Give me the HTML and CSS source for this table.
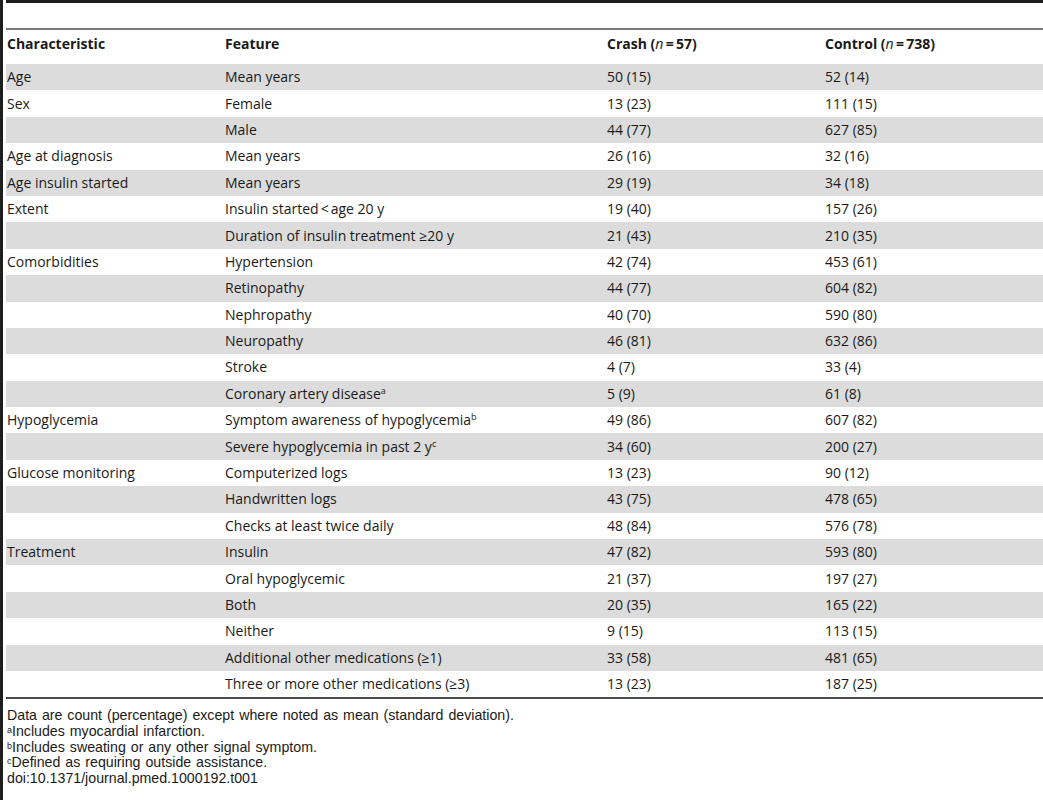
FILE: index.html
```html
<!DOCTYPE html>
<html lang="en">
<head>
    <meta charset="UTF-8">
    <meta name="viewport" content="width=device-width, initial-scale=1.0">
    <title>Table 1. Characteristics of drivers</title>
    <link rel="stylesheet" href="styles.css">
</head>
<body>
    <div class="frame">
        <div class="figure">
            <table class="data-table">
                <thead>
                    <tr>
                        <th class="col-char">Characteristic</th>
                        <th class="col-feat">Feature</th>
                        <th class="col-crash">Crash (<i>n</i>&thinsp;=&thinsp;57)</th>
                        <th class="col-control">Control (<i>n</i>&thinsp;=&thinsp;738)</th>
                    </tr>
                </thead>
                <tbody>
                    <tr><td>Age</td><td>Mean years</td><td>50 (15)</td><td>52 (14)</td></tr>
                    <tr><td>Sex</td><td>Female</td><td>13 (23)</td><td>111 (15)</td></tr>
                    <tr><td></td><td>Male</td><td>44 (77)</td><td>627 (85)</td></tr>
                    <tr><td>Age at diagnosis</td><td>Mean years</td><td>26 (16)</td><td>32 (16)</td></tr>
                    <tr><td>Age insulin started</td><td>Mean years</td><td>29 (19)</td><td>34 (18)</td></tr>
                    <tr><td>Extent</td><td>Insulin started<span class="lt">&lt;</span>age 20 y</td><td>19 (40)</td><td>157 (26)</td></tr>
                    <tr><td></td><td>Duration of insulin treatment &ge;20 y</td><td>21 (43)</td><td>210 (35)</td></tr>
                    <tr><td>Comorbidities</td><td>Hypertension</td><td>42 (74)</td><td>453 (61)</td></tr>
                    <tr><td></td><td>Retinopathy</td><td>44 (77)</td><td>604 (82)</td></tr>
                    <tr><td></td><td>Nephropathy</td><td>40 (70)</td><td>590 (80)</td></tr>
                    <tr><td></td><td>Neuropathy</td><td>46 (81)</td><td>632 (86)</td></tr>
                    <tr><td></td><td>Stroke</td><td>4 (7)</td><td>33 (4)</td></tr>
                    <tr><td></td><td>Coronary artery disease<sup>a</sup></td><td>5 (9)</td><td>61 (8)</td></tr>
                    <tr><td>Hypoglycemia</td><td>Symptom awareness of hypoglycemia<sup>b</sup></td><td>49 (86)</td><td>607 (82)</td></tr>
                    <tr><td></td><td>Severe hypoglycemia in past 2 y<sup>c</sup></td><td>34 (60)</td><td>200 (27)</td></tr>
                    <tr><td>Glucose monitoring</td><td>Computerized logs</td><td>13 (23)</td><td>90 (12)</td></tr>
                    <tr><td></td><td>Handwritten logs</td><td>43 (75)</td><td>478 (65)</td></tr>
                    <tr><td></td><td>Checks at least twice daily</td><td>48 (84)</td><td>576 (78)</td></tr>
                    <tr><td>Treatment</td><td>Insulin</td><td>47 (82)</td><td>593 (80)</td></tr>
                    <tr><td></td><td>Oral hypoglycemic</td><td>21 (37)</td><td>197 (27)</td></tr>
                    <tr><td></td><td>Both</td><td>20 (35)</td><td>165 (22)</td></tr>
                    <tr><td></td><td>Neither</td><td>9 (15)</td><td>113 (15)</td></tr>
                    <tr><td></td><td>Additional other medications (&ge;1)</td><td>33 (58)</td><td>481 (65)</td></tr>
                    <tr><td></td><td>Three or more other medications (&ge;3)</td><td>13 (23)</td><td>187 (25)</td></tr>
                </tbody>
            </table>
            <div class="notes">
                <p>Data are count (percentage) except where noted as mean (standard deviation).</p>
                <p><sup>a</sup>Includes myocardial infarction.</p>
                <p><sup>b</sup>Includes sweating or any other signal symptom.</p>
                <p><sup>c</sup>Defined as requiring outside assistance.</p>
                <p>doi:10.1371/journal.pmed.1000192.t001</p>
            </div>
        </div>
    </div>
</body>
</html>
```
FILE: styles.css
```css
body {
    margin: 0;
    padding: 0;
    background-color: #ffffff;
    color: #1a1a1a;
    font-family: "Open Sans", "Noto Sans", sans-serif;
    font-size: 14px;
}

.frame {
    border-left: 3px solid #1e1e1e;
    padding-left: 3px;
    min-height: 100vh;
    box-sizing: border-box;
}

.figure {
    border-top: 3px solid #1e1e1e;
    padding-top: 25px;
}

.data-table {
    border-collapse: collapse;
    width: 100%;
    table-layout: fixed;
    border-top: 2px solid #7a7a7a;
    border-bottom: 2px solid #4a4a4a;
}

.col-char {
    width: 216px;
}

.col-feat {
    width: 380px;
}

.col-crash {
    width: 216px;
}

.col-control {
    width: 225px;
}

th {
    text-align: left;
    font-weight: 700;
    height: 26px;
    padding: 0 1px 8px;
}

th i {
    font-weight: 400;
}

td {
    height: 26.4px;
    padding: 0 1px;
    white-space: nowrap;
    line-height: 18px;
}

tbody tr:nth-child(odd) {
    background-color: #dcdcdc;
}

sup {
    font-size: 9px;
    line-height: 0;
    vertical-align: 5px;
}

.lt {
    padding: 0 2px;
}

.notes {
    padding-top: 9px;
    font-family: "Liberation Sans", Arial, sans-serif;
    font-size: 14.2px;
    word-spacing: 1px;
}

.notes p {
    margin: 0;
    line-height: 15.6px;
    padding-left: 1px;
}

.notes sup {
    font-size: 9px;
    vertical-align: 3px;
}
```
